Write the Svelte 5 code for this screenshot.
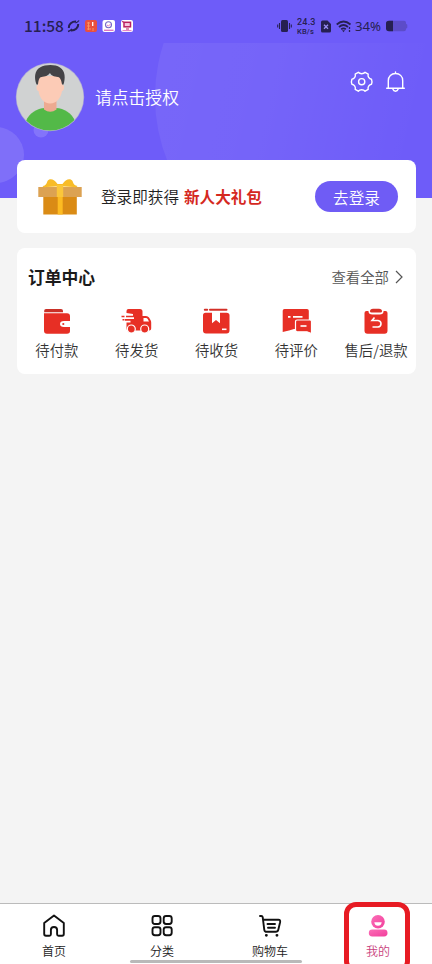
<script>
  const orders = [
    { id: 'pay', label: '待付款' },
    { id: 'ship', label: '待发货' },
    { id: 'receive', label: '待收货' },
    { id: 'review', label: '待评价' },
    { id: 'refund', label: '售后/退款' }
  ];
  const tabs = [
    { id: 'home', label: '首页' },
    { id: 'category', label: '分类' },
    { id: 'cart', label: '购物车' },
    { id: 'mine', label: '我的', active: true }
  ];
</script>

<div class="page">
  <header class="hero">
    <svg class="deco" width="432" height="198" viewBox="0 0 432 198">
      <defs>
        <linearGradient id="glow" x1="155" y1="0" x2="432" y2="60" gradientUnits="userSpaceOnUse">
          <stop offset="0" stop-color="#fff" stop-opacity=".065" />
          <stop offset=".45" stop-color="#fff" stop-opacity=".05" />
          <stop offset="1" stop-color="#fff" stop-opacity="0" />
        </linearGradient>
        <clipPath id="below"><rect y="43" width="432" height="155" /></clipPath>
      </defs>
      <circle cx="327" cy="97" r="172" fill="url(#glow)" clip-path="url(#below)" />
      <circle cx="-4" cy="155" r="28" fill="#fff" fill-opacity=".12" />
      <circle cx="41" cy="130" r="7.5" fill="#fff" fill-opacity=".15" />
    </svg>

    <div class="status">
      <span class="clock">11:58</span>
      <svg class="apps" width="68" height="14" viewBox="0 0 68 14">
        <g fill="none" stroke="#262052" stroke-width="2">
          <path d="M1.800 9C1.500 5 5 2.500 9 2.600M11.200 5C11.500 9 8 11.600 4 11.400" />
          <path d="M1 12.500C3 12 4 11 5 10M8.500 4Q11 3 12 1.500" stroke-width="1.300" />
        </g>
        <rect x="18" y="1" width="12" height="12" rx="2" fill="#e9503f" />
        <path d="M20 4h3M21.500 3v8M20 7h3M20 10h4M26 9v3" stroke="#f79a65" stroke-width=".9" />
        <path d="M25.700 3v4" stroke="#fff" stroke-width="1.300" />
        <rect x="35.500" y="1" width="12.500" height="12" rx="2" fill="#fff" />
        <circle cx="41.500" cy="5.700" r="3" fill="none" stroke="#7668c7" stroke-width="1.100" />
        <path d="M40 6l1.500 1L43.500 5" stroke="#e45b9c" fill="none" stroke-width=".8" />
        <path d="M37 11.300h9.500" stroke="#dd78bd" stroke-width="1.400" />
        <rect x="54" y="1" width="12" height="12" rx="2" fill="#fff" />
        <rect x="57" y="3.300" width="6.500" height="4.500" fill="#f6c7dc" stroke="#b92061" stroke-width="1.500" />
        <path d="M55 2.500l2 .8M59 10h3" stroke="#b92061" stroke-width="1.200" />
        <path d="M55.500 11.600h9" stroke="#e581c2" stroke-width="1.100" />
      </svg>
      <div class="system">
        <svg width="15" height="14" viewBox="0 0 15 14">
          <rect x="4" y="1" width="7" height="12" rx="1.500" fill="#262052" />
          <path d="M2.500 4v6M12.500 4v6M.7 5.500v3M14.300 5.500v3" stroke="#262052" stroke-width="1.100" />
        </svg>
        <span class="speed"><span class="rate">24.3</span><span class="unit">KB/s</span></span>
        <svg class="sim" width="10" height="13" viewBox="0 0 10 13">
          <path d="M1.500.5h5L10 4v7a1.500 1.500 0 0 1-1.500 1.500h-7A1.500 1.500 0 0 1 0 11V2Q0 .5 1.500.5z" fill="#262052" />
          <path d="M3 4.800l4 4M7 4.800l-4 4" stroke="#9a8ff5" stroke-width="1.300" />
        </svg>
        <svg class="wifi" width="16" height="13" viewBox="0 0 16 13">
          <g fill="none" stroke="#262052" stroke-width="1.700">
            <path d="M.7 4.500Q7.500-1.500 14.500 4.500M3 7Q7.500 3 12 7M5.200 9.200Q7.500 7.500 9.800 9.200" />
          </g>
          <path d="M6 10.300h3l-1.500 2z" fill="#262052" />
          <path d="M13.500 7v2M13.500 10v2" stroke="#262052" stroke-width="1.300" />
        </svg>
        <span class="percent">34%</span>
        <svg class="battery" width="22" height="12" viewBox="0 0 22 12">
          <path d="M3 .7h15q2 0 2 2v1l1.300 1v3L20 8.700v.6q0 2-2 2H3q-3 0-3-3V3.500q0-2.800 3-2.800z" fill="#5c4cc9" />
          <path d="M3 .7h4v10.600H3q-3 0-3-3V3.500Q0 .7 3 .7z" fill="#262052" />
        </svg>
      </div>
    </div>

    <div class="user">
      <svg class="avatar" width="70" height="70" viewBox="0 0 70 70">
        <defs><clipPath id="face"><circle cx="35" cy="35" r="33.500" /></clipPath></defs>
        <circle cx="35" cy="35" r="34.200" fill="#aaa5dc" />
        <g clip-path="url(#face)">
          <rect width="70" height="70" fill="#d0d2d2" />
          <path d="M11 70V59C14 51 22 46.500 30 46h11c8 .5 16 5 19 13v11z" fill="#53b948" />
          <path d="M29 37h12.500v10.500q-6.200 4.500-12.500 0z" fill="#edaa91" />
          <path d="M23 14h24.500v9q2 0 1.500 3-.5 3.500-2 3C46 36 41.500 41.500 35.200 41.500S24.500 36 23.500 29q-1.700.5-2-3-.3-3 1.500-3z" fill="#fccbb6" />
          <path d="M21.500 22.500C19 16 19.500 8.500 25 5.500 31 2.300 40 2.300 45 5.500c5.500 3.500 5.500 11 3.500 17h-1.500c-.5-4-1.700-7-4-7.500-4.500-.3-6.500-1.500-8-4-2 3-5 3.500-8.500 4-2.500.5-3 3.500-3.500 7.500z" fill="#434346" />
        </g>
      </svg>
      <span class="name">请点击授权</span>
      <svg class="tools" width="58" height="24" viewBox="0 0 58 24">
        <g fill="none" stroke="#fff" stroke-width="1.400" stroke-linejoin="round" stroke-linecap="round">
          <path d="M8.300 2.300C9.800 4.200 13.600 4.200 15.100 2.300L18.200 4.100C17.500 6.500 19 8.900 21.500 9.200C22 10.500 22 13 21.500 14.300C19 14.600 17.500 17 18.200 19.400L15.100 21.200C13.600 19.300 9.800 19.300 8.300 21.200L5.200 19.400C5.900 17 4.400 14.600 1.900 14.300C1.400 13 1.400 10.500 1.900 9.200C4.400 8.900 5.900 6.500 5.200 4.100z" />
          <circle cx="11.700" cy="11.700" r="3.100" />
          <path d="M38.300 17.800V10.700c0-4.400 3-7.200 7.200-7.200s7.200 2.800 7.200 7.200v7.100M36.700 18.200h17.600M45.500 3V2M42.800 19q.8 2.200 2.700 2.200T48.200 19" />
        </g>
      </svg>
    </div>
  </header>

  <section class="card gift">
    <svg class="present" width="44" height="37" viewBox="0 0 44 37">
      <rect x="5.300" y="15" width="33.500" height="21.500" fill="#da8b15" />
      <rect x=".3" y="9" width="43.400" height="10" fill="#dca252" />
      <path d="M4.500 8C7 7.800 8.500 6.500 9.500 3c2-3 7-2 10 3h5c3-5 8-6 10-3 1 3.500 2.500 4.500 5 5q-1 1.800-4 1l-9.500-.5h-8l-9.500.5q-3 .8-4-1z" fill="#f8bc28" />
      <path d="M18.800 7h6.400v12h-6.400z" fill="#fbc63a" />
      <path d="M19.700 19h5v17.500h-5z" fill="#fdbb22" />
    </svg>
    <p>登录即获得 <strong>新人大礼包</strong></p>
    <button>去登录</button>
  </section>

  <section class="card orders">
    <div class="head">
      <h2>订单中心</h2>
      <span class="all">查看全部
        <svg width="8" height="14" viewBox="0 0 8 14"><path d="M1 1l6 6-6 6" fill="none" stroke="#555" stroke-width="1.200" /></svg>
      </span>
    </div>
    <div class="grid">
      {#each orders as o}
        <div class="order">
          <svg width="32" height="28" viewBox="0 0 32 28" fill="#e72f25">
            {#if o.id === 'pay'}
              <path d="M5 2h15q2 0 2 2v1.200H3.200V3.800Q3.200 2 5 2z" fill="#c93027" />
              <path d="M3 6.200h23q3 0 3 3v4.800h-6q-4 0-4 3t4 3h6v4q0 2.700-3 2.700H6q-3 0-3-3z" />
              <circle cx="22.300" cy="17" r="1.100" />
            {:else if o.id === 'ship'}
              <path d="M5.500 6V4Q5.500 2 7.500 2h11.500q2.500 0 2.500 2.500V9h3.500q2 0 3 1.500l1.500 2.500q.7 1 .7 2.500v6q0 2-2 2H7q-1.500 0-1.500-2v-6h4v-1.800H4V12h9v-1.700H5V8.700h7V7z" />
              <path d="M.5 8.700h3v1.600h-3zM1.500 12h2v1.500h-2z" />
              <path d="M22.500 11h2.500q1 0 1.700 1l1.300 2.500h-5.500z" fill="#fff" />
              <g stroke="#fff" stroke-width="1.200"><circle cx="10.300" cy="22" r="4" /><circle cx="23.700" cy="22" r="4" /></g>
            {:else if o.id === 'receive'}
              <path d="M4.800 2.800h2.400M10 2.800h16.500" stroke="#d32f27" stroke-width="2" fill="none" stroke-linecap="round" />
              <path d="M5.500 5.800H12v10.500l4-3.200 4 3.200V5.800h6.500Q29.500 5.800 29.500 8.300V23.500q0 3-3 3H6q-3 0-3-3V8.300Q3 5.800 5.500 5.800z" />
              <path d="M22 22.300h4.500" stroke="#fff" stroke-width="1.600" />
            {:else if o.id === 'review'}
              <path d="M4.500 2h22.500q1.800 0 1.800 1.800V22H14l-5 1.500L2.700 25V3.800Q2.700 2 4.500 2z" />
              <path d="M8 9.800H10.500M13 9.800h9.500" stroke="#fff" stroke-width="1.700" />
              <path d="M17.200 13h12.800q1.500 0 1.500 1.500v12l-4.500-1.700h-9.800q-1.700 0-1.700-1.700v-8.400Q15.500 13 17.200 13z" stroke="#fff" stroke-width="1.200" />
              <path d="M20.500 19h6" stroke="#fff" stroke-width="1.600" />
            {:else}
              <path d="M6.500 4h19q2 0 2 2V23.700q0 3-3 3h-17q-3 0-3-3V6q0-2 2-2z" />
              <path d="M8.500 3.500h15v.8q0 3.200-4 3.200h-7q-4 0-4-3.200z" fill="#fff" />
              <path d="M10 4.500Q10 1.700 13 1.700h6q3 0 3 2.800 0 1-1.500 1h-9Q10 5.500 10 4.500z" fill="#d93027" />
              <path d="M14.500 10.500L12 13.500h6q3 .3 3 3.200t-3 3.300h-5.500" fill="none" stroke="#fff" stroke-width="1.600" />
            {/if}
          </svg>
          <span>{o.label}</span>
        </div>
      {/each}
    </div>
  </section>

  <nav>
    {#each tabs as t}
      <div class="tab" class:active={t.active}>
        <svg width="24" height="24" viewBox="0 0 24 24" fill="none" stroke="#111" stroke-width="1.900" stroke-linejoin="round" stroke-linecap="round">
          {#if t.id === 'home'}
            <path d="M2.200 9L12 1.500 21.800 9v11q0 1.700-1.700 1.700h-3.500q-1.500 0-1.500-1.500V16q0-3-3.100-3t-3.100 3v4.200q0 1.500-1.500 1.500H4q-1.800 0-1.800-1.700z" />
          {:else if t.id === 'category'}
            <rect x="2.500" y="2" width="8" height="8" rx="2.400" /><rect x="13.700" y="2" width="8" height="8" rx="2.400" />
            <rect x="2.500" y="13.200" width="8" height="8" rx="2.400" /><rect x="13.700" y="13.200" width="8" height="8" rx="2.400" />
          {:else if t.id === 'cart'}
            <path d="M2 2h1.200q1.300 0 1.500 1.200l1.600 12.600q.3 2 2.300 2h9.200q2 0 2.500-2l1.800-7.600q.5-2.500-1.700-2.500H5.200M9.500 10h7.500M10 13.800h7" />
            <path d="M8.300 21.300h.1M18.900 21.300h.1" stroke-width="2.800" />
          {:else}
            <defs><linearGradient id="pink" x1="0" y1="0" x2="1" y2="1"><stop offset="0" stop-color="#fb6eb7" /><stop offset="1" stop-color="#f23f9c" /></linearGradient></defs>
            <circle cx="12" cy="7.800" r="6.800" fill="url(#pink)" stroke="none" />
            <path d="M8.300 8.300h7.400q-.5 3.500-3.700 3.500T8.300 8.300z" fill="#fff" stroke="none" />
            <rect x="2.800" y="15.500" width="18.700" height="6.900" rx="3.450" fill="url(#pink)" stroke="none" />
          {/if}
        </svg>
        <span>{t.label}</span>
      </div>
    {/each}
    <i class="handle"></i>
    <i class="mark"></i>
  </nav>
</div>

<style>
  .page {
    width: 432px;
    height: 964px;
    display: flex;
    flex-direction: column;
    overflow: hidden;
    background: #f4f4f4;
    font-family: "Noto Sans CJK SC", sans-serif;
    font-weight: 350;
    color: #222;
  }
  svg { display: block; flex: none; }
  .hero { position: relative; height: 198px; flex: none; background: #6e5cf9; }
  .deco { position: absolute; inset: 0; }
  .status {
    position: relative;
    height: 52px;
    box-sizing: border-box;
    padding: 0 24px;
    display: flex;
    align-items: center;
    color: #262052;
    font-family: "Noto Sans", sans-serif;
  }
  .clock { font-family: "Noto Sans CJK SC", sans-serif; font-size: 15.500px; line-height: 20px; font-weight: 500; width: 43px; margin-top: -2px; white-space: nowrap; }
  .system { margin-left: auto; display: flex; align-items: center; }
  .speed { display: flex; flex-direction: column; width: 19px; margin: 0 4px 0 5px; font-family: Roboto, sans-serif; font-weight: 500; white-space: nowrap; }
  .rate { font-size: 9px; line-height: 10px; letter-spacing: .2px; }
  .unit { font-size: 7.500px; line-height: 9px; letter-spacing: .2px; }
  .sim { margin-left: 1px; }
  .wifi { margin: 0 3px 0 5px; }
  .percent { font-size: 13.200px; font-weight: 400; width: 31px; white-space: nowrap; }
  .user { position: relative; display: flex; align-items: center; padding: 10px 24px 0 15px; }
  .name { margin-left: 10px; color: #fff; font-size: 16.800px; line-height: 24px; }
  .tools { margin: -31px 0 0 auto; }
  .card { background: #fff; border-radius: 8px; margin: 0 16px 0 17px; box-sizing: border-box; flex: none; position: relative; }
  .gift { height: 73px; margin-top: -38px; display: flex; align-items: center; padding: 0 18px 0 21px; }
  .gift p { margin: -2px 0 0 19px; font-size: 15.600px; white-space: nowrap; }
  .gift strong { margin-left: 1.500px; color: #d5291f; font-weight: 700; }
  button { margin-left: auto; width: 83px; height: 31px; border: 0; border-radius: 16px; background: #6f5cf5; color: #fff; font: 350 15.600px/30px "Noto Sans CJK SC", sans-serif; padding: 0; }
  .orders { height: 126px; margin-top: 15px; padding-top: 16px; }
  .head { height: 26px; display: flex; align-items: center; justify-content: space-between; padding: 0 13px 0 11px; }
  h2 { margin: 0; font-size: 16.800px; line-height: 26px; font-weight: 700; color: #1b1b1b; }
  .all { display: flex; align-items: center; gap: 6px; font-size: 14.400px; line-height: 26px; color: #555; }
  .grid { display: flex; margin-top: 17px; }
  .order { flex: 1; display: flex; flex-direction: column; align-items: center; font-size: 14.400px; line-height: 22px; color: #333; white-space: nowrap; }
  .order span { margin-top: 4px; }
  nav { position: relative; display: flex; height: 61px; box-sizing: border-box; margin-top: auto; background: #fff; border-top: 1px solid #bbb; }
  .tab { flex: 1; display: flex; flex-direction: column; align-items: center; padding-top: 10px; font-size: 12px; line-height: 18px; color: #222; }
  .tab span { margin-top: 4px; }
  .active { color: #c93f7d; }
  .handle { position: absolute; left: 130px; bottom: 1px; width: 172px; height: 3px; border-radius: 2px; background: #b9b9b9; }
  .mark { position: absolute; left: 344px; top: -2px; width: 66px; height: 71px; box-sizing: border-box; border: 5px solid #e71b23; border-radius: 12px; }
</style>
